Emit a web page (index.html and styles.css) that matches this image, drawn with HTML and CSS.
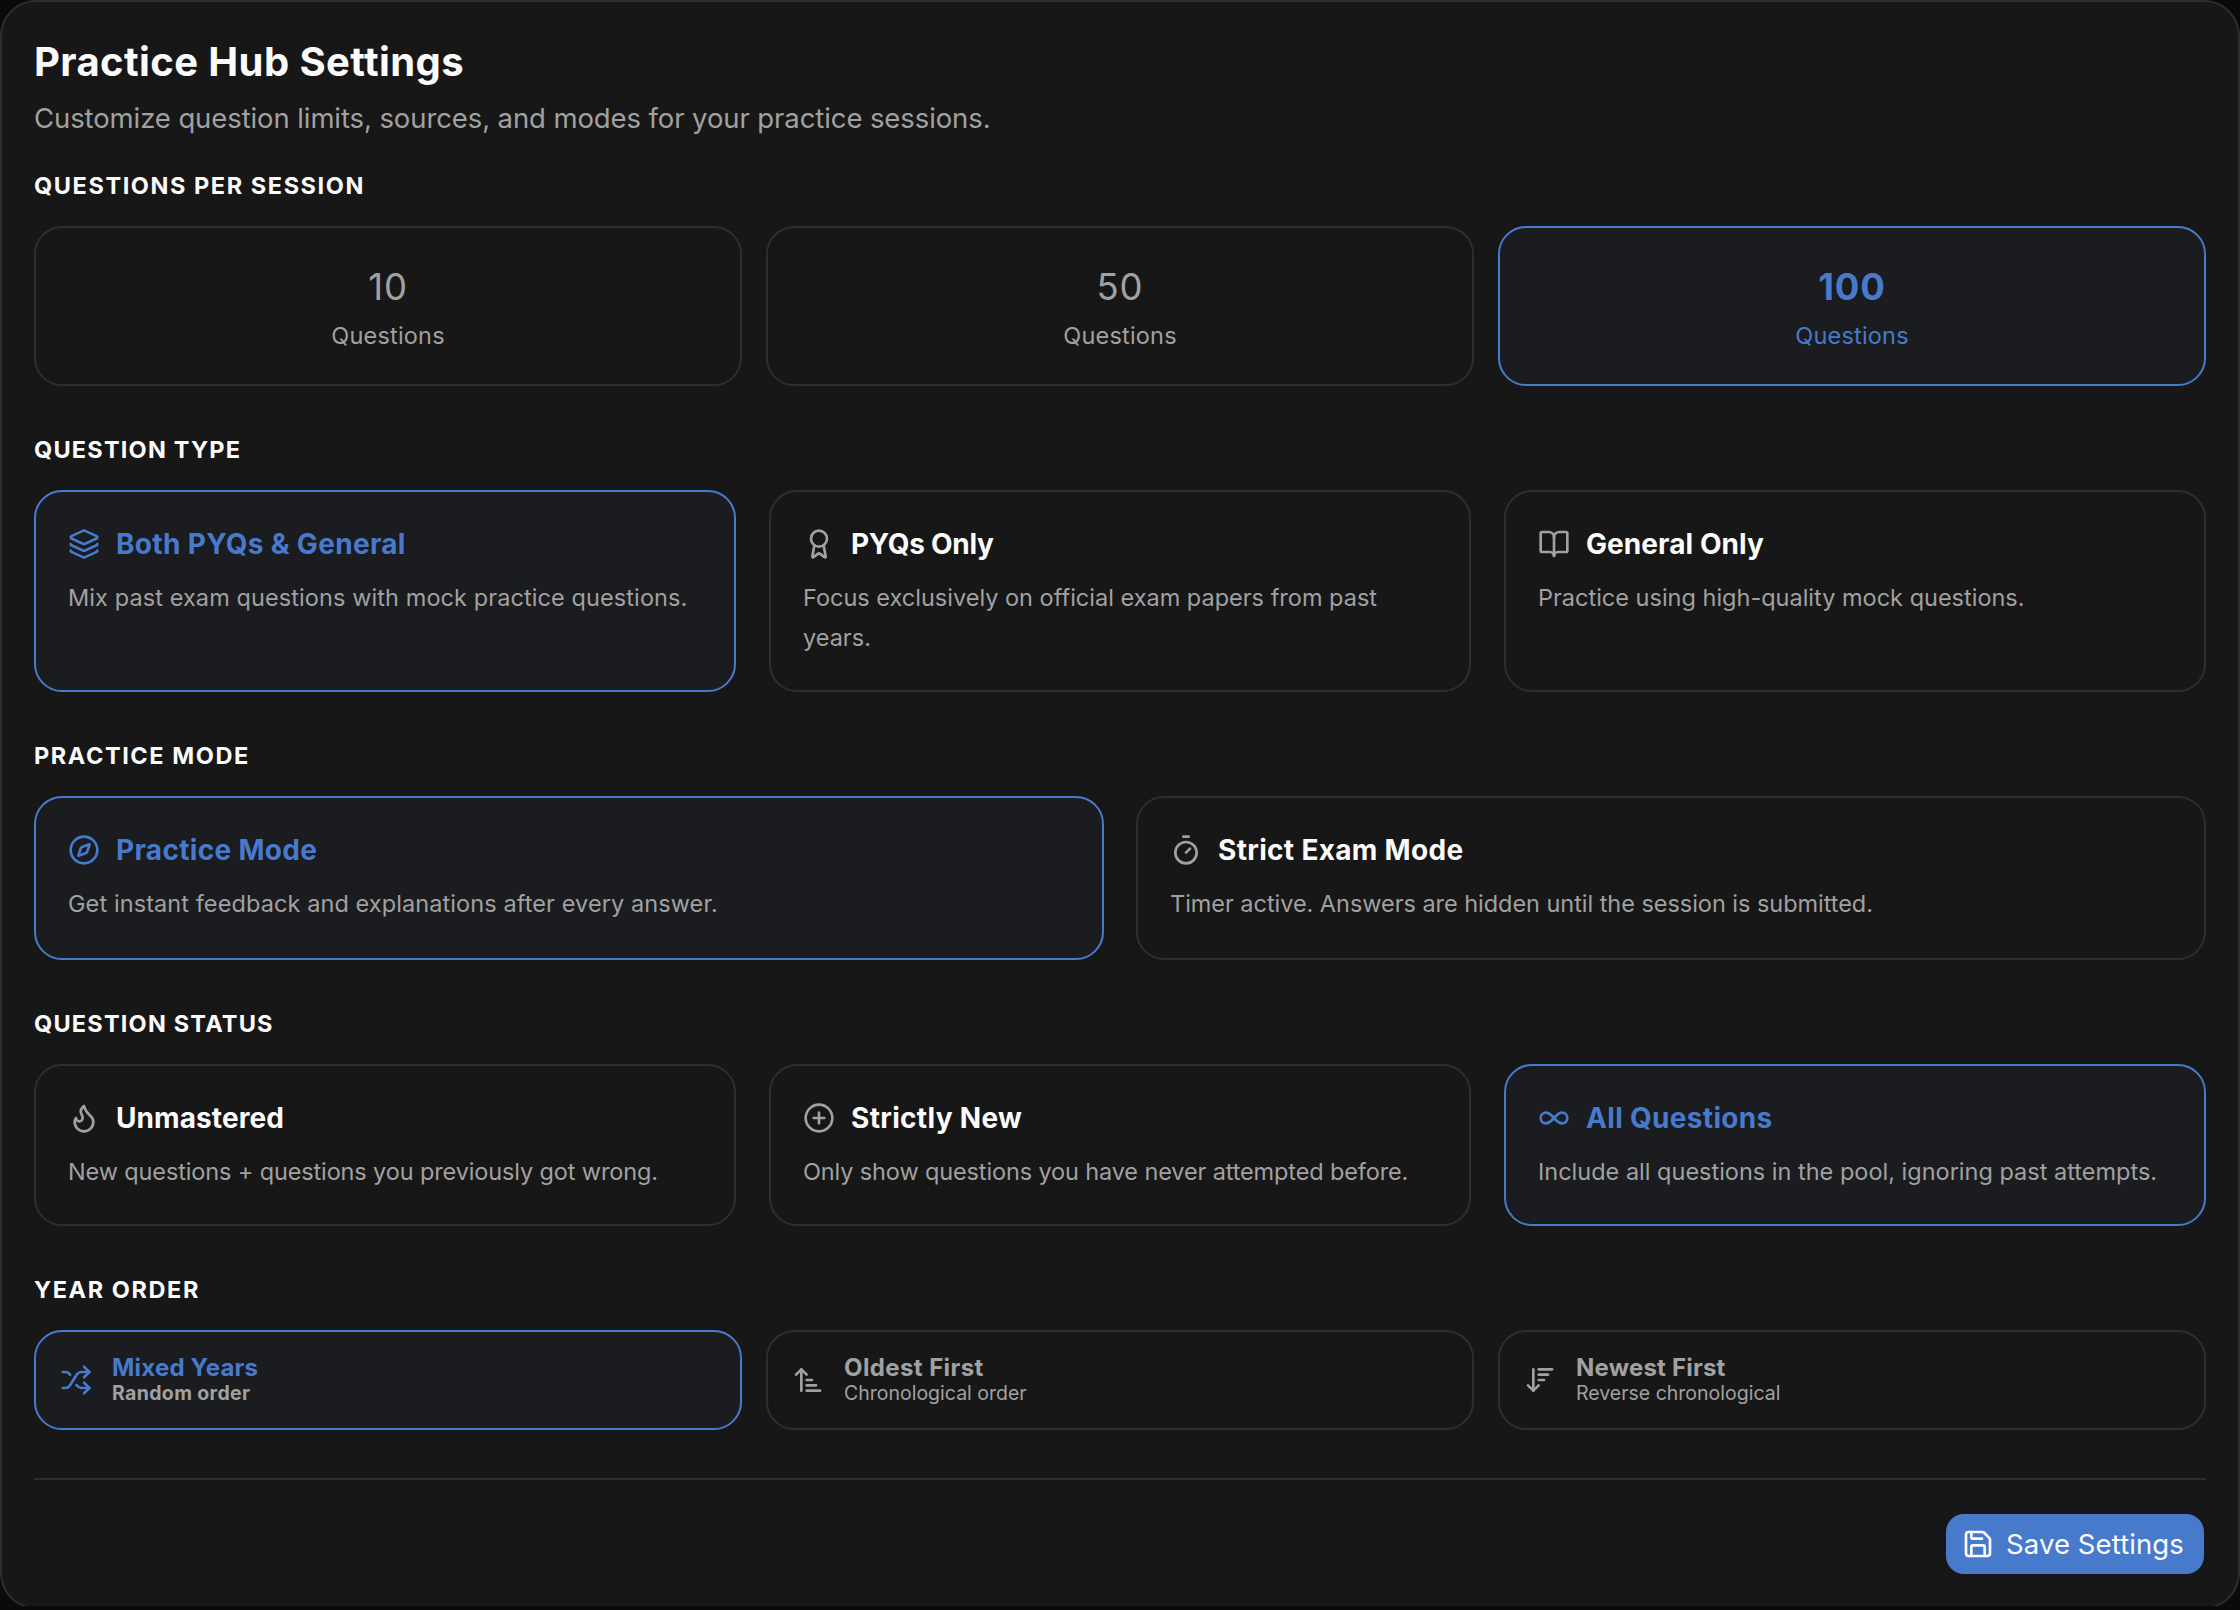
FILE: index.html
```html
<!DOCTYPE html>
<html lang="en">
<head>
<meta charset="utf-8">
<title>Practice Hub Settings</title>
<link rel="stylesheet" href="styles.css">
</head>
<body>
<div class="viewport">
<main class="panel">
  <header class="head">
    <h1 class="title">Practice Hub Settings</h1>
    <p class="subtitle">Customize question limits, sources, and modes for your practice sessions.</p>
  </header>

  <section class="section">
    <h2 class="label">Questions per session</h2>
    <div class="grid tight">
      <button class="card count"><span class="num">10</span><span class="unit">Questions</span></button>
      <button class="card count"><span class="num">50</span><span class="unit">Questions</span></button>
      <button class="card count active"><span class="num">100</span><span class="unit">Questions</span></button>
    </div>
  </section>

  <section class="section">
    <h2 class="label snug">Question type</h2>
    <div class="grid">
      <button class="card option active">
        <span class="name"><svg class="icon" viewBox="0 0 24 24"><path d="M12.83 2.18a2 2 0 0 0-1.66 0L2.6 6.08a1 1 0 0 0 0 1.83l8.58 3.91a2 2 0 0 0 1.66 0l8.58-3.9a1 1 0 0 0 0-1.83z"/><path d="M2 12a1 1 0 0 0 .58.91l8.6 3.91a2 2 0 0 0 1.65 0l8.58-3.9A1 1 0 0 0 22 12"/><path d="M2 17a1 1 0 0 0 .58.91l8.6 3.91a2 2 0 0 0 1.65 0l8.58-3.9A1 1 0 0 0 22 17"/></svg><span>Both PYQs &amp; General</span></span>
        <span class="desc wide">Mix past exam questions with mock practice questions.</span>
      </button>
      <button class="card option">
        <span class="name snug"><svg class="icon" viewBox="0 0 24 24"><path d="m15.477 12.89 1.515 8.526a.5.5 0 0 1-.81.47l-3.58-2.687a1 1 0 0 0-1.197 0l-3.586 2.686a.5.5 0 0 1-.81-.469l1.514-8.526"/><circle cx="12" cy="8" r="6"/></svg><span>PYQs Only</span></span>
        <span class="desc">Focus exclusively on official exam papers from past years.</span>
      </button>
      <button class="card option">
        <span class="name even"><svg class="icon" viewBox="0 0 24 24"><path d="M12 7v14"/><path d="M3 18a1 1 0 0 1-1-1V4a1 1 0 0 1 1-1h5a4 4 0 0 1 4 4 4 4 0 0 1 4-4h5a1 1 0 0 1 1 1v13a1 1 0 0 1-1 1h-6a3 3 0 0 0-3 3 3 3 0 0 0-3-3z"/></svg><span>General Only</span></span>
        <span class="desc">Practice using high-quality mock questions.</span>
      </button>
    </div>
  </section>

  <section class="section">
    <h2 class="label">Practice mode</h2>
    <div class="grid two">
      <button class="card option mode active">
        <span class="name"><svg class="icon" viewBox="0 0 24 24"><path d="m16.24 7.76-1.804 5.411a2 2 0 0 1-1.265 1.265L7.76 16.24l1.804-5.411a2 2 0 0 1 1.265-1.265z"/><circle cx="12" cy="12" r="10"/></svg><span>Practice Mode</span></span>
        <span class="desc wide">Get instant feedback and explanations after every answer.</span>
      </button>
      <button class="card option mode">
        <span class="name"><svg class="icon" viewBox="0 0 24 24"><path d="M10 2h4"/><path d="m12 14 3-3"/><circle cx="12" cy="14" r="8"/></svg><span>Strict Exam Mode</span></span>
        <span class="desc close">Timer active. Answers are hidden until the session is submitted.</span>
      </button>
    </div>
  </section>

  <section class="section">
    <h2 class="label snug">Question status</h2>
    <div class="grid">
      <button class="card option status">
        <span class="name even"><svg class="icon" viewBox="0 0 24 24"><path d="M12 3q1 4 4 6.500t3 5.500a1 1 0 0 1-14 0 5 5 0 0 1 1-3 1 1 0 0 0 5 0c0-2-1.500-3-1.500-5q0-2 2.500-4"/></svg><span>Unmastered</span></span>
        <span class="desc narrow">New questions + questions you previously got wrong.</span>
      </button>
      <button class="card option status">
        <span class="name"><svg class="icon" viewBox="0 0 24 24"><circle cx="12" cy="12" r="10"/><path d="M8 12h8"/><path d="M12 8v8"/></svg><span>Strictly New</span></span>
        <span class="desc narrow">Only show questions you have never attempted before.</span>
      </button>
      <button class="card option status active">
        <span class="name"><svg class="icon" viewBox="0 0 24 24"><path d="M6 16c5 0 7-8 12-8a4 4 0 0 1 0 8c-5 0-7-8-12-8a4 4 0 1 0 0 8"/></svg><span>All Questions</span></span>
        <span class="desc">Include all questions in the pool, ignoring past attempts.</span>
      </button>
    </div>
  </section>

  <section class="section">
    <h2 class="label">Year order</h2>
    <div class="grid tight">
      <button class="card order active">
        <svg class="icon" viewBox="0 0 24 24"><path d="m18 14 4 4-4 4"/><path d="m18 2 4 4-4 4"/><path d="M2 18h1.973a4 4 0 0 0 3.3-1.7l5.454-8.6a4 4 0 0 1 3.3-1.7H22"/><path d="M2 6h1.972a4 4 0 0 1 3.6 2.2"/><path d="M22 18h-6.041a4 4 0 0 1-3.3-1.8l-.359-.45"/></svg>
        <span class="lines"><span class="order-name">Mixed Years</span><span class="order-sub">Random order</span></span>
      </button>
      <button class="card order">
        <svg class="icon" viewBox="0 0 24 24"><path d="m3 8 4-4 4 4"/><path d="M7 4v16"/><path d="M11 12h4"/><path d="M11 16h7"/><path d="M11 20h10"/></svg>
        <span class="lines"><span class="order-name wide">Oldest First</span><span class="order-sub">Chronological order</span></span>
      </button>
      <button class="card order">
        <svg class="icon" viewBox="0 0 24 24"><path d="m3 16 4 4 4-4"/><path d="M7 20V4"/><path d="M11 4h10"/><path d="M11 8h7"/><path d="M11 12h4"/></svg>
        <span class="lines"><span class="order-name">Newest First</span><span class="order-sub">Reverse chronological</span></span>
      </button>
    </div>
  </section>

  <footer class="foot">
    <button class="save"><svg class="icon" viewBox="0 0 24 24"><path d="M15.2 3a2 2 0 0 1 1.4.6l3.8 3.8a2 2 0 0 1 .6 1.4V19a2 2 0 0 1-2 2H5a2 2 0 0 1-2-2V5a2 2 0 0 1 2-2z"/><path d="M17 21v-7a1 1 0 0 0-1-1H8a1 1 0 0 0-1 1v7"/><path d="M7 3v4a1 1 0 0 0 1 1h7"/></svg><span>Save Settings</span></button>
  </footer>
</main>
</div>
</body>
</html>
```
FILE: styles.css
```css
* { box-sizing: border-box; margin: 0; }

body {
  background: #0a0a0a;
  font-family: Inter, "Liberation Sans", sans-serif;
  color: #fafafa;
  height: 1610px;
  overflow: hidden;
}

button {
  font: inherit;
  color: inherit;
  text-align: left;
  border: 0;
}

/* The panel runs slightly past the visible area */
.viewport { height: 1606px; overflow: hidden; }

.panel {
  height: 1609px;
  padding: 32px;
  border: 2px solid #2e2e2e;
  border-radius: 36px;
  background: #171717;
}

.title { font-size: 40px; line-height: 56px; font-weight: 700; letter-spacing: 0.4px; white-space: nowrap; }
.subtitle { margin-top: 8px; font-size: 27.5px; line-height: 40px; letter-spacing: -0.1px; color: #a1a1a1; white-space: nowrap; }

.section { margin-top: 48px; }
.head + .section { margin-top: 32px; }

.label {
  margin-bottom: 24px;
  font-size: 23.5px;
  line-height: 32px;
  font-weight: 700;
  letter-spacing: 1.57px;
  text-transform: uppercase;
}
.label.snug { letter-spacing: 1.2px; }

.grid { display: grid; grid-template-columns: repeat(3, 1fr); gap: 33px; }
.grid.two { grid-template-columns: repeat(2, 1fr); gap: 32px; }
.grid.tight { gap: 24px; }

.card {
  display: flex;
  border: 2px solid #2e2e2e;
  border-radius: 28px;
  background: #171717;
}
.card.active { border-color: #487acc; background: #1a1c20; }

.icon {
  flex: none;
  width: 32px;
  height: 32px;
  fill: none;
  stroke: currentColor;
  stroke-width: 2;
  stroke-linecap: round;
  stroke-linejoin: round;
}
.card .icon { color: #a1a1a1; }

.count { flex-direction: column; align-items: center; height: 160px; padding: 31px 32px; gap: 5px; color: #a1a1a1; }
.num { font-size: 36.5px; line-height: 56px; letter-spacing: 0.8px; }
.unit { font-size: 23.5px; line-height: 32px; letter-spacing: 0.2px; }
.count.active { color: #487acc; }
.count.active .num { font-weight: 700; }

.option { flex-direction: column; gap: 14px; height: 202px; padding: 32px; }
.option.mode { height: 164px; }
.option.status { height: 162px; }
.name { display: flex; align-items: center; gap: 16px; font-size: 28px; line-height: 40px; font-weight: 700; letter-spacing: 0.32px; }
.name.even { letter-spacing: 0.08px; }
.name.snug { letter-spacing: -0.3px; }
.desc { font-size: 23.5px; line-height: 40px; color: #a1a1a1; }
.desc.wide { letter-spacing: 0.09px; }
.desc.close { letter-spacing: -0.04px; }
.desc.narrow { letter-spacing: -0.13px; }
.active .name, .card.active .icon, .active .order-name { color: #487acc; }

.order { align-items: center; gap: 20px; height: 100px; padding: 0 24px; color: #a1a1a1; }
.lines { display: flex; flex-direction: column; }
.order-name { padding-top: 1px; font-size: 24px; line-height: 26px; font-weight: 700; letter-spacing: 0.2px; }
.order-name.wide { letter-spacing: 0.4px; }
.order-sub { font-size: 19.5px; line-height: 25px; }
.active .order-sub { font-weight: 700; letter-spacing: 0.35px; }

.foot { display: flex; justify-content: flex-end; margin-top: 48px; padding: 34px 2px 0; border-top: 2px solid #2e2e2e; }
.save {
  display: flex;
  align-items: center;
  gap: 12px;
  width: 258px;
  height: 60px;
  padding: 0 16px;
  border-radius: 18px;
  background: #487acc;
  font-size: 27.5px;
  letter-spacing: 0.1px;
  white-space: nowrap;
}
```
